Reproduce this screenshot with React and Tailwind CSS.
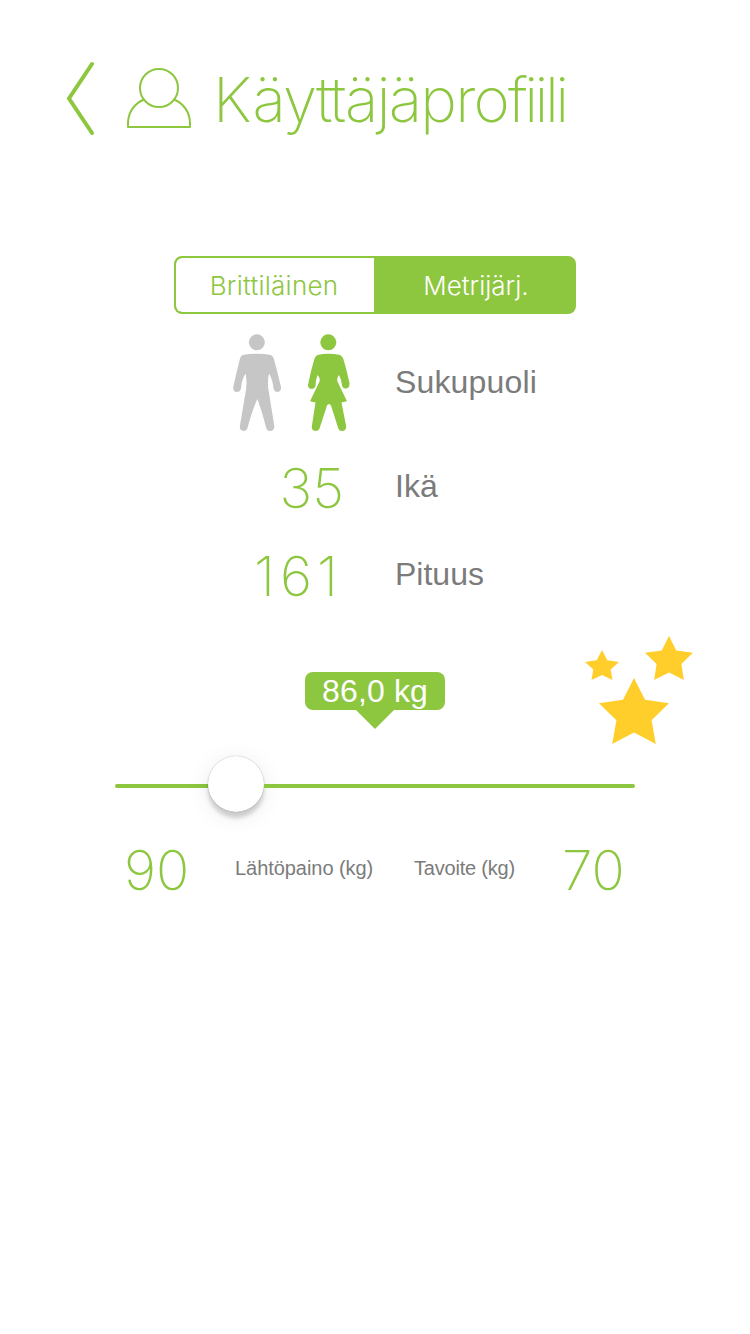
import React, { useState } from "react";

const thin = "font-['Inter',sans-serif] font-extralight text-[#8dc63f] whitespace-nowrap";
const label = "font-['Liberation_Sans',Arial,sans-serif] text-[#7b7b7b] whitespace-nowrap";

function BackIcon() {
  return (
    <svg width="32" height="76" viewBox="0 0 32 76" fill="none">
      <path
        d="M27 4 L4 38.5 L27 73"
        stroke="#8dc63f"
        strokeWidth="4"
        strokeLinecap="round"
        strokeLinejoin="miter"
      />
    </svg>
  );
}

function ProfileIcon() {
  return (
    <svg width="66" height="62" viewBox="0 0 66 62" fill="none" stroke="#8dc63f" strokeWidth="2">
      <circle cx="33" cy="21" r="19" />
      <path d="M18.500 32.500 C8 36 2 46 2 56.500 V60 H64 V56.500 C64 46 58 36 47.500 32.500" strokeLinejoin="round" />
    </svg>
  );
}

function ManIcon({ color }) {
  return (
    <svg width="50" height="98" viewBox="0 0 50 98" fill={color}>
      <circle cx="24.9" cy="8.3" r="8" />
      <path d="M10.5 21 Q24.5 18.500 39 21 Q41 22 41.800 24.500 Q45.500 38 49 53 Q49.300 57.500 45.800 58 Q42.500 58 41.500 54.500 Q40.800 46 37 39.500 Q35.500 46 36.200 54 L42.400 92.500 Q42 97 38 97 Q35 97 34.300 94.500 Q30 77 25.300 65 Q20 77 15.500 94 Q14.500 97 11.500 97 Q7.500 96.500 7.800 92.500 L14.300 54 Q15 46 13.500 39.500 Q9.500 46 9 54.500 Q8 58 4.700 58 Q1 57.500 1.200 53.500 Q4.300 39 8 24.500 Q8.700 22 10.500 21 Z" />
    </svg>
  );
}

function WomanIcon({ color }) {
  return (
    <svg width="44" height="98" viewBox="0 0 44 98" fill={color}>
      <circle cx="21.300" cy="8.300" r="8" />
      <path d="M10.500 21 Q21.500 18.500 33 21 Q35.200 22 36.200 24.500 Q39.500 35 42.500 49 Q42.700 54 39.500 54.500 Q35.800 55 35 51.500 Q34.300 45 32 41 Q29.500 44 30.500 47.500 Q35 57 40 67.300 L34.500 68.500 L39.200 92.500 Q39 97 35 97 Q32.300 97 31.300 94.500 L24 71.500 Q22 68.500 20 71.500 L12.500 94.500 Q11.500 97 8.500 97 Q4.500 96.500 4.800 92.500 L8.500 68.500 L3 67.300 Q8 57 12.500 47.500 Q13.500 44 10.500 41 Q8.800 45 8.500 52 Q7.500 55 4.500 55 Q.8 54.500 1 51 Q3.700 37 7.500 24.500 Q8.500 22 10.500 21 Z" />
    </svg>
  );
}

function Stars() {
  return (
    <svg width="108" height="108" viewBox="0 0 108 108" fill="#ffce2b">
      <path d="M17 14 L22.300 24.200 L34 26 L25.700 33.600 L27.500 44 L17 39 L6.500 44 L8.300 33.600 L0 26 L11.700 24.200 Z" />
      <path d="M84 0 L91.300 14.500 L108 16.800 L96.400 28 L98.800 44 L84 36.500 L69.200 44 L71.600 28 L60 16.800 L76.700 14.500 Z" />
      <path d="M49 42 L60 63.700 L84 67.200 L66.600 84.200 L70.800 108 L49 96.500 L27.200 108 L31.400 84.200 L14 67.200 L38 63.700 Z" />
    </svg>
  );
}

function UnitSwitch({ units, value, onChange }) {
  return (
    <div className="grid h-[58px] w-[402px] grid-cols-[198px_1fr] overflow-hidden rounded-lg border-2 border-[#8dc63f] bg-[#8dc63f] font-['Inter',sans-serif] text-[26px] font-[350]">
      {units.map((unit) => (
        <button
          key={unit}
          onClick={() => onChange(unit)}
          className={
            unit === value
              ? "bg-[#8dc63f] pl-1 text-white"
              : "rounded-l-md bg-white pr-0.5 text-[#8dc63f] tracking-[0.25px]"
          }
        >
          {unit}
        </button>
      ))}
    </div>
  );
}

export default function App() {
  const [unit, setUnit] = useState("Metrijärj.");
  const [gender, setGender] = useState("female");

  return (
    <div className="h-[1334px] w-[750px] overflow-hidden bg-white">
      <header className="flex h-[196px] items-center pl-[65px]">
        <BackIcon />
        <div className="ml-[29px]">
          <ProfileIcon />
        </div>
        <h1 className={`${thin} ml-[21px] pt-1 text-[62px] leading-[74px] tracking-[-1.8px]`}>
          <span className="tracking-[1px]">K</span>äyttäjäpro
          <span className="tracking-[-3.600px]">fiili</span>
        </h1>
      </header>

      <div className="mt-[60px] flex justify-center">
        <UnitSwitch units={["Brittiläinen", "Metrijärj."]} value={unit} onChange={setUnit} />
      </div>

      <section className="mt-5">
        <div className="flex h-[98px] items-center">
          <div className="flex w-[395px] gap-[25px] pl-[232px]">
            <button onClick={() => setGender("male")}>
              <ManIcon color={gender === "male" ? "#8dc63f" : "#c6c6c6"} />
            </button>
            <button onClick={() => setGender("female")}>
              <WomanIcon color={gender === "female" ? "#8dc63f" : "#c6c6c6"} />
            </button>
          </div>
          <span className={`${label} pb-0.5 text-[32px] leading-9 tracking-[0.15px]`}>Sukupuoli</span>
        </div>
        <div className="mt-3 flex h-[88px] items-center">
          <span className={`${thin} w-[344px] text-right text-[55px]`}>35</span>
          <span className={`${label} ml-[51px] pb-1 text-[32px] leading-9`}>Ikä</span>
        </div>
        <div className="flex h-[88px] items-center">
          <span className={`${thin} w-[343px] text-right text-[55px] tracking-[5px]`}>161</span>
          <span className={`${label} ml-[52px] pb-1 text-[32px] leading-9`}>Pituus</span>
        </div>
      </section>

      <section>
        <div className="mt-4 flex h-[108px] pl-[305px]">
          <div className="mt-9 flex w-[140px] flex-col items-center">
            <div className="flex h-[38px] w-full items-center justify-center rounded-lg bg-[#8dc63f] font-['Liberation_Sans',Arial,sans-serif] text-[32px] tracking-[0.15px] text-white">
              86,0 kg
            </div>
            <svg width="38" height="19" viewBox="0 0 38 19" fill="#8dc63f">
              <path d="M0 0 H38 L19 19 Z" />
            </svg>
          </div>
          <div className="ml-[140px]">
            <Stars />
          </div>
        </div>

        <div className="mx-[115px] mt-[11px] flex h-[58px] items-center">
          <div className="mt-1 h-1 w-[93px] rounded-l-full bg-[#8dc63f]" />
          <div className="size-14 rounded-full bg-white shadow-[0_0_1px_rgba(0,0,0,0.4),0_6px_4px_rgba(0,0,0,0.17),0_4px_26px_rgba(0,0,0,0.08)]" />
          <div className="mt-1 h-1 flex-1 rounded-r-full bg-[#8dc63f]" />
        </div>

        <div className="mt-[13px] flex h-[88px] items-center pl-[124px]">
          <span className={`${thin} w-[111px] text-[55px]`}>90</span>
          <span className={`${label} w-[179px] pb-1 text-[20px] tracking-[-0.05px]`}>Lähtöpaino (kg)</span>
          <span className={`${label} w-[148px] pb-1 text-[20px] tracking-[-0.2px]`}>Tavoite (kg)</span>
          <span className={`${thin} text-[55px]`}>70</span>
        </div>
      </section>
    </div>
  );
}
